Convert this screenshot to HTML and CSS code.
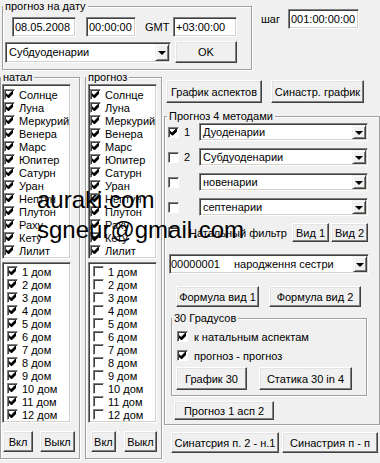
FILE: index.html
```html
<!DOCTYPE html>
<html>
<head>
    <title>Прогноз</title>
    <link rel="stylesheet" href="styles.css">
</head>
<body>
    <div class="top">
        <fieldset class="group date-group">
            <legend>прогноз на дату</legend>
            <div class="date-row">
                <div class="edit e-date">08.05.2008</div>
                <div class="edit e-time">00:00:00</div>
                <span class="gmt">GMT</span>
                <div class="edit e-gmt">+03:00:00</div>
            </div>
            <div class="date-row second">
                <div class="combo c-method"><span class="txt">Субдуоденарии</span><i class="drop"></i></div>
                <button class="btn b-ok">OK</button>
            </div>
        </fieldset>
        <div class="step">
            <span>шаг</span>
            <div class="edit e-step">001:00:00:00</div>
        </div>
    </div>

    <div class="main">
        <fieldset class="group col natal">
            <legend>натал</legend>
            <ul class="list planets">
                <li><span class="cb on"></span>Солнце</li>
                <li><span class="cb on"></span>Луна</li>
                <li><span class="cb on"></span>Меркурий</li>
                <li><span class="cb on"></span>Венера</li>
                <li><span class="cb on"></span>Марс</li>
                <li><span class="cb on"></span>Юпитер</li>
                <li><span class="cb on"></span>Сатурн</li>
                <li><span class="cb on"></span>Уран</li>
                <li><span class="cb on"></span>Нептун</li>
                <li><span class="cb on"></span>Плутон</li>
                <li><span class="cb on"></span>Раху</li>
                <li><span class="cb on"></span>Кету</li>
                <li><span class="cb on"></span>Лилит</li>
            </ul>
            <ul class="list houses">
                <li><span class="cb on"></span>1 дом</li>
                <li><span class="cb on"></span>2 дом</li>
                <li><span class="cb on"></span>3 дом</li>
                <li><span class="cb on"></span>4 дом</li>
                <li><span class="cb on"></span>5 дом</li>
                <li><span class="cb on"></span>6 дом</li>
                <li><span class="cb on"></span>7 дом</li>
                <li><span class="cb on"></span>8 дом</li>
                <li><span class="cb on"></span>9 дом</li>
                <li><span class="cb on"></span>10 дом</li>
                <li><span class="cb on"></span>11 дом</li>
                <li><span class="cb on"></span>12 дом</li>
            </ul>
            <div class="onoff">
                <button class="btn b-on">Вкл</button>
                <button class="btn b-off">Выкл</button>
            </div>
        </fieldset>

        <fieldset class="group col prognoz">
            <legend>прогноз</legend>
            <ul class="list planets">
                <li><span class="cb on"></span>Солнце</li>
                <li><span class="cb on"></span>Луна</li>
                <li><span class="cb on"></span>Меркурий</li>
                <li><span class="cb on"></span>Венера</li>
                <li><span class="cb on"></span>Марс</li>
                <li><span class="cb on"></span>Юпитер</li>
                <li><span class="cb on"></span>Сатурн</li>
                <li><span class="cb on"></span>Уран</li>
                <li><span class="cb on"></span>Нептун</li>
                <li><span class="cb on"></span>Плутон</li>
                <li><span class="cb on"></span>Раху</li>
                <li><span class="cb on"></span>Кету</li>
                <li><span class="cb on"></span>Лилит</li>
            </ul>
            <ul class="list houses">
                <li><span class="cb"></span>1 дом</li>
                <li><span class="cb"></span>2 дом</li>
                <li><span class="cb"></span>3 дом</li>
                <li><span class="cb"></span>4 дом</li>
                <li><span class="cb"></span>5 дом</li>
                <li><span class="cb"></span>6 дом</li>
                <li><span class="cb"></span>7 дом</li>
                <li><span class="cb"></span>8 дом</li>
                <li><span class="cb"></span>9 дом</li>
                <li><span class="cb"></span>10 дом</li>
                <li><span class="cb"></span>11 дом</li>
                <li><span class="cb"></span>12 дом</li>
            </ul>
            <div class="onoff">
                <button class="btn b-on">Вкл</button>
                <button class="btn b-off">Выкл</button>
            </div>
        </fieldset>

        <div class="right">
            <div class="top-btns">
                <button class="btn b-graph">График аспектов</button>
                <button class="btn b-syn">Синастр. график</button>
            </div>

            <fieldset class="group methods">
                <legend>Прогноз 4 методами</legend>
                <div class="method">
                    <span class="cb on"></span><span class="num">1</span>
                    <div class="combo"><span class="txt">Дуоденарии</span><i class="drop"></i></div>
                </div>
                <div class="method">
                    <span class="cb"></span><span class="num">2</span>
                    <div class="combo"><span class="txt">Субдуоденарии</span><i class="drop"></i></div>
                </div>
                <div class="method">
                    <span class="cb"></span><span class="num"></span>
                    <div class="combo"><span class="txt">новенарии</span><i class="drop"></i></div>
                </div>
                <div class="method">
                    <span class="cb"></span><span class="num"></span>
                    <div class="combo"><span class="txt">септенарии</span><i class="drop"></i></div>
                </div>

                <div class="filter">
                    <span class="cb"></span><span class="flabel">Натальный фильтр</span>
                    <button class="btn b-vid">Вид 1</button>
                    <button class="btn b-vid">Вид 2</button>
                </div>

                <div class="combo c-event"><span class="code">00000001</span><span class="txt">народження сестри</span><i class="drop"></i></div>

                <div class="formula">
                    <button class="btn b-f1">Формула вид 1</button>
                    <button class="btn b-f2">Формула вид 2</button>
                </div>

                <fieldset class="group deg30">
                    <legend>30 Градусов</legend>
                    <div class="check-row"><span class="cb on"></span>к натальным аспектам</div>
                    <div class="check-row"><span class="cb on"></span>прогноз - прогноз</div>
                    <div class="deg-btns">
                        <button class="btn b-g30">График 30</button>
                        <button class="btn b-st30">Статика 30 in 4</button>
                    </div>
                </fieldset>

                <button class="btn b-p1">Прогноз 1 асп 2</button>
            </fieldset>

            <div class="bottom-btns">
                <button class="btn b-s1">Синатсрия п. 2 - н.1</button>
                <button class="btn b-s2">Синастрия п - п</button>
            </div>
        </div>
    </div>

    <div class="watermark">auraki.com<br>sgneur@gmail.com</div>
</body>
</html>
```

FILE: styles.css
```css
body { margin: 0; width: 380px; height: 463px; overflow: hidden; position: relative; background: #f0f0f0; color: #000; font: 11px "Liberation Sans", Arial, sans-serif; }

/* classic win controls */
.group { margin: 0; padding: 0; box-sizing: border-box; min-width: 0; border: 1px solid #a0a0a0; box-shadow: inset 1px 1px 0 #fff, 1px 1px 0 #fff; }
.group legend { padding: 0 2px; line-height: 13px; background: #f0f0f0; }
.edit { box-sizing: border-box; height: 20px; display: flex; align-items: center; padding: 0 0 0 2px; background: #fff; white-space: nowrap; overflow: hidden; border: 1px solid; border-color: #808080 #fff #fff #808080; box-shadow: inset 1px 1px 0 #404040, inset -1px -1px 0 #d4d0c8; }
.combo { box-sizing: border-box; height: 18px; display: flex; align-items: center; padding: 1px 1px 1px 3px; background: #fff; white-space: nowrap; border: 1px solid; border-color: #808080 #fff #fff #808080; box-shadow: inset 1px 1px 0 #404040, inset -1px -1px 0 #d4d0c8; }
.combo .txt { flex: 1; }
.drop { align-self: stretch; box-sizing: border-box; width: 14px; display: flex; align-items: center; justify-content: center; background: #f0f0f0; border: 1px solid; border-color: #f0f0f0 #404040 #404040 #f0f0f0; box-shadow: inset 1px 1px 0 #fff, inset -1px -1px 0 #808080; }
.drop::after { content: ""; border-top: 4px solid #000; border-left: 4px solid transparent; border-right: 4px solid transparent; margin-top: 1px; }
.btn { box-sizing: border-box; padding: 0; font: inherit; color: #000; background: #f0f0f0; white-space: nowrap; border: 1px solid; border-color: #fff #404040 #404040 #fff; box-shadow: inset -1px -1px 0 #808080, inset 1px 1px 0 #e3e3e3; }
.cb { flex: none; box-sizing: border-box; width: 11px; height: 11px; background: #fff; border: 1px solid; border-color: #808080 #fff #fff #808080; box-shadow: inset 1px 1px 0 #404040; }
.cb.on::after { content: ""; display: block; width: 7px; height: 7px; margin: 1px 0 0 1px; background: #000; clip-path: polygon(0 29%, 29% 57%, 86% 0, 100% 0, 100% 43%, 43% 100%, 29% 100%, 0 71%); }

/* top date block */
.top { display: flex; align-items: flex-start; }
.date-group { margin-left: 2px; width: 250px; padding: 4px 0 6px; }
.date-row { display: flex; align-items: center; }
.date-row.second { margin-top: 4px; }
.e-date { width: 64px; margin-left: 9px; }
.e-time { width: 50px; margin-left: 10px; }
.gmt { width: 28px; margin-left: 9px; }
.e-gmt { width: 64px; }
.c-method { width: 166px; height: 21px; margin-left: 2px; }
.b-ok { width: 62px; height: 22px; margin-left: 4px; }
.step { display: flex; align-items: center; margin: 9px 0 0 9px; }
.e-step { width: 71px; margin-left: 8px; }

/* main columns */
.main { display: flex; align-items: flex-start; margin-top: 1px; }
.col { width: 83px; padding: 0 0 6px; }
.prognoz { width: 80px; margin-left: 5px; }
.list { list-style: none; margin: 0 0 0 1px; width: 69px; box-sizing: border-box; background: #fff; border: 1px solid; border-color: #808080 #fff #fff #808080; box-shadow: inset 1px 1px 0 #404040, inset -1px -1px 0 #d4d0c8; }
.prognoz .list { margin-left: 2px; }
.list li { height: 13px; display: flex; align-items: center; gap: 4px; white-space: nowrap; }
.planets { padding: 3px 0 1px 1px; }
.houses { margin-top: 3px; padding: 2px 0 1px 4px; }
.onoff { display: flex; margin-top: 8px; }
.b-on, .b-off { height: 21px; }
.natal .b-on { width: 30px; margin-left: 2px; }
.natal .b-off { width: 35px; margin-left: 7px; }
.prognoz .b-on { width: 25px; margin-left: 5px; }
.prognoz .b-off { width: 33px; margin-left: 8px; }

/* right side */
.right { flex: none; width: 216px; margin-left: 2px; }
.top-btns { display: flex; margin: 9px 0 0 2px; }
.b-graph { width: 96px; height: 23px; }
.b-syn { width: 93px; height: 23px; margin-left: 9px; }
.methods { width: 216px; margin-top: 7px; padding: 0 0 4px; }
.methods > legend { margin-left: 2px; }
.method { display: flex; align-items: center; height: 18px; margin-bottom: 7px; padding-left: 3px; }
.num { width: 15px; padding-left: 5px; }
.method .combo { width: 169px; }
.filter { display: flex; align-items: center; height: 19px; padding-left: 3px; }
.flabel { width: 103px; margin-left: 10px; }
.b-vid { width: 37px; height: 19px; margin-right: 2px; }
.c-event { width: 200px; height: 20px; margin: 12px 0 0 4px; padding-left: 1px; }
.c-event .code { width: 63px; }
.formula { display: flex; margin: 12px 0 0 11px; }
.b-f1 { width: 83px; height: 21px; }
.b-f2 { width: 92px; height: 21px; margin-left: 10px; }
.deg30 { width: 196px; margin: 5px 0 0 6px; padding: 0 0 5px; }
.check-row { display: flex; align-items: center; gap: 6px; height: 13px; margin-top: 6px; padding-left: 5px; }
.check-row:first-of-type { margin-top: 5px; }
.deg-btns { display: flex; margin: 5px 0 0 4px; }
.b-g30 { width: 71px; height: 23px; }
.b-st30 { width: 93px; height: 23px; margin-left: 12px; }
.b-p1 { display: block; width: 100px; height: 19px; margin: 5px 0 0 9px; }
.bottom-btns { display: flex; margin: 7px 0 0 7px; }
.b-s1 { width: 108px; height: 21px; }
.b-s2 { width: 96px; height: 21px; margin-left: 3px; }

/* text stamped over the screenshot */
.watermark { position: absolute; left: 37px; top: 185px; font: 24px/30px "Liberation Sans", Arial, sans-serif; color: #000; white-space: nowrap; }
```
